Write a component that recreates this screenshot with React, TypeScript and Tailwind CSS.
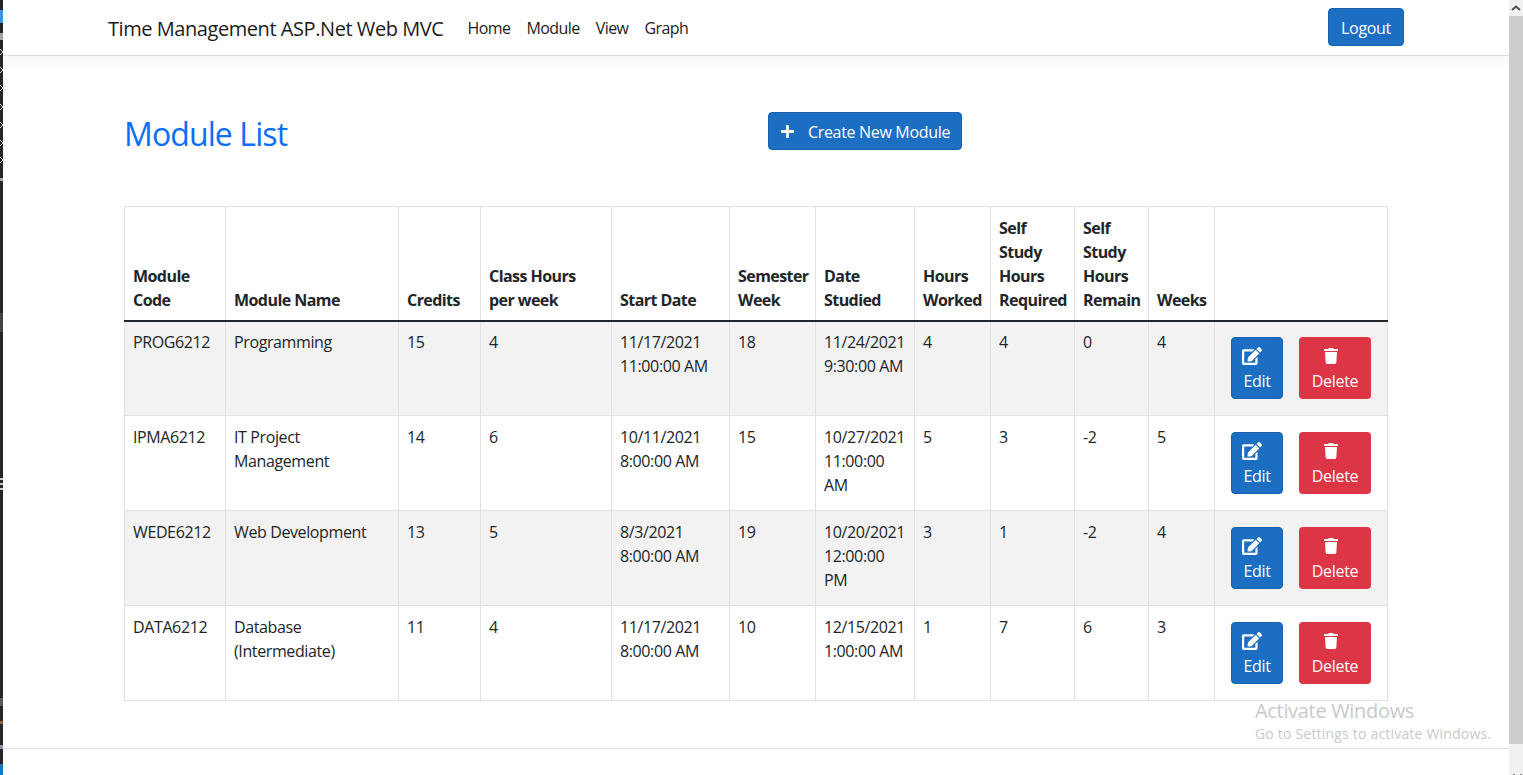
import React from 'react';
import { FaEdit, FaPlus, FaTrash } from 'react-icons/fa';

const modules = [
  { code: 'PROG6212', name: 'Programming', credits: '15', hours: '4', start: '11/17/2021\n11:00:00 AM', week: '18', studied: '11/24/2021\n9:30:00 AM', worked: '4', required: '4', remain: '0', weeks: '4' },
  { code: 'IPMA6212', name: 'IT Project\nManagement', credits: '14', hours: '6', start: '10/11/2021\n8:00:00 AM', week: '15', studied: '10/27/2021\n11:00:00\nAM', worked: '5', required: '3', remain: '-2', weeks: '5' },
  { code: 'WEDE6212', name: 'Web Development', credits: '13', hours: '5', start: '8/3/2021\n8:00:00 AM', week: '19', studied: '10/20/2021\n12:00:00\nPM', worked: '3', required: '1', remain: '-2', weeks: '4' },
  { code: 'DATA6212', name: 'Database\n(Intermediate)', credits: '11', hours: '4', start: '11/17/2021\n8:00:00 AM', week: '10', studied: '12/15/2021\n1:00:00 AM', worked: '1', required: '7', remain: '6', weeks: '3' },
];

const columns = [
  { title: 'Module\nCode', width: 'w-[101px]' },
  { title: 'Module Name', width: 'w-[173px]' },
  { title: 'Credits', width: 'w-[82px]' },
  { title: 'Class Hours\nper week', width: 'w-[131px]' },
  { title: 'Start Date', width: 'w-[118px]' },
  { title: 'Semester\nWeek', width: 'w-[86px]' },
  { title: 'Date\nStudied', width: 'w-[99px]' },
  { title: 'Hours\nWorked', width: 'w-[76px]' },
  { title: 'Self\nStudy\nHours\nRequired', width: 'w-[84px]' },
  { title: 'Self\nStudy\nHours\nRemain', width: 'w-[74px]' },
  { title: 'Weeks', width: 'w-[66px]' },
  { title: '', width: 'w-[173px]' },
];

const Navbar = () => (
  <nav className="flex h-[56px] shrink-0 items-center border-b border-[#dedede] bg-white pl-[105px] pr-[105px] shadow-[0_4px_12px_rgba(0,0,0,0.05)]">
    <span className="mt-[2px] text-[20px] tracking-[-0.022em] text-[#1c1c1c]">Time Management ASP.Net Web MVC</span>
    <div className="ml-[24px] flex gap-[16px] tracking-[-0.035em] text-[#1c1c1c]">
      <span>Home</span>
      <span>Module</span>
      <span>View</span>
      <span>Graph</span>
    </div>
    <button className="mb-[2px] ml-auto h-[38px] w-[76px] rounded border border-[#1861ac] bg-[#1b6ec2] pt-[2px] text-white">Logout</button>
  </nav>
);

const ModuleTable = () => (
  <table className="w-[1264px] table-fixed border-collapse text-[#212529]">
    <colgroup>
      {columns.map((c, i) => (
        <col key={i} className={c.width} />
      ))}
    </colgroup>
    <thead>
      <tr className="h-[114px]">
        {columns.map((c, i) => (
          <th key={i} className="whitespace-pre-line border border-b-2 border-[#dee2e6] border-b-[#212529] p-2 text-left align-bottom font-bold tracking-[-0.035em]">
            {c.title}
          </th>
        ))}
      </tr>
    </thead>
    <tbody>
      {modules.map((m, i) => (
        <tr key={m.code} className={i % 2 === 0 ? 'h-[95px] bg-[#f2f2f2]' : 'h-[95px]'}>
          {[m.code, m.name, m.credits, m.hours, m.start, m.week, m.studied, m.worked, m.required, m.remain, m.weeks].map((v, j) => (
            <td key={j} className={`whitespace-pre-line border border-[#dee2e6] px-2 pb-2 align-top tracking-[-0.024em] ${i === 0 ? 'pt-2' : 'pt-[9px]'}`}>
              {v}
            </td>
          ))}
          <td className={`border border-[#dee2e6] px-2 pb-2 align-top ${i === 0 ? 'pt-2' : 'pt-[9px]'}`}>
            <div className="ml-2 mt-[7px] flex gap-4">
              <button className="flex h-[62px] w-[52px] flex-col items-center rounded border border-[#1861ac] bg-[#1b6ec2] pt-[9px] text-white">
                <FaEdit className="mr-[11px] h-[18px] w-[20px] shrink-0" />
                <span className="mt-[4px]">Edit</span>
              </button>
              <button className="flex h-[62px] w-[72px] flex-col items-center rounded bg-[#dc3545] pt-[11px] text-white">
                <FaTrash className="mr-[9px] h-[16px] w-[16px] shrink-0" />
                <span className="mt-[5px]">Delete</span>
              </button>
            </div>
          </td>
        </tr>
      ))}
    </tbody>
  </table>
);

const Scrollbar = () => (
  <div className="flex w-[14px] shrink-0 flex-col bg-[#f0f0f0]">
    <div className="flex h-[16px] items-center justify-center">
      <svg viewBox="0 0 10 6" className="h-[6px] w-[10px]">
        <path d="M1 5l4-3.5L9 5" fill="none" stroke="#505050" strokeWidth="2" />
      </svg>
    </div>
    <div className="h-[728px] bg-[#cdcdcd]" />
    <svg viewBox="0 0 14 1" className="mt-auto h-[1px] w-[14px]">
      <rect x="4" width="2" height="1" fill="#7a7a7a" />
      <rect x="11" width="2" height="1" fill="#7a7a7a" />
    </svg>
  </div>
);

// the edge of the window behind the browser, only 3px of it shows
const WindowEdge = () => (
  <div className="flex w-[3px] shrink-0 flex-col bg-[#262626]">
    <svg viewBox="0 0 3 775" className="h-[775px] w-[3px]">
      <rect y="10" width="3" height="13" fill="#3f9ae0" />
      <rect y="33" width="3" height="7" fill="#a8a8a8" />
      {[52, 70, 88, 107, 125, 143, 160].map((y) => (
        <path key={y} d={`M0 ${y - 3}l3 3-3 3`} fill="none" stroke="#d8d8d8" strokeWidth="1" />
      ))}
      <rect y="178" width="3" height="3" fill="#a8a8a8" />
      <rect y="313" width="3" height="19" fill="#444444" />
      <rect y="478" width="3" height="2" fill="#c8c8c8" />
      <rect y="483" width="3" height="2" fill="#c8c8c8" />
      <rect y="488" width="3" height="2" fill="#c8c8c8" />
      <rect y="698" width="3" height="8" fill="#5a5a5a" />
      <rect y="721" width="3" height="3" fill="#8a6a3a" />
      <rect y="745" width="3" height="4" fill="#8a94a8" />
      <rect y="764" width="3" height="11" fill="#1478c0" />
    </svg>
  </div>
);

export default function App() {
  return (
    <div className="relative flex h-[775px] overflow-hidden bg-white font-['Open_Sans',sans-serif] text-[16px] leading-[24px] tracking-[-0.02em]">
      <WindowEdge />
      <div className="flex min-w-0 flex-1 flex-col">
        <Navbar />
        <main className="pl-[121px]">
          <div className="flex h-[94px] items-start pt-[56px]">
            <h1 className="mt-[3px] w-[644px] text-[32px] leading-[38px] tracking-[-0.028em] text-[#0d6efd]">Module List</h1>
            <button className="flex h-[38px] w-[194px] items-center justify-center gap-[13px] rounded border border-[#1861ac] bg-[#1b6ec2] pt-[1px] text-white">
              <FaPlus className="h-[15px] w-[15px]" />
              <span>Create New Module</span>
            </button>
          </div>
          <div className="mt-[56px]">
            <ModuleTable />
          </div>
        </main>
        <footer className="mt-[47px] h-[30px] border-t border-[#dee2e6] pl-[105px] pt-[22px] text-[14px] text-[#6c757d]">
          © 2021 - Time Management ASP.Net Web MVC - <span className="text-[#0d6efd]">Privacy</span>
        </footer>
      </div>
      <Scrollbar />
      <div className="absolute left-[1255px] top-[698px] text-[#c9c9c9]">
        <div className="text-[20px] leading-[26px]">Activate Windows</div>
        <div className="text-[14px] leading-[19px] tracking-[0.014em]">Go to Settings to activate Windows.</div>
      </div>
    </div>
  );
}
